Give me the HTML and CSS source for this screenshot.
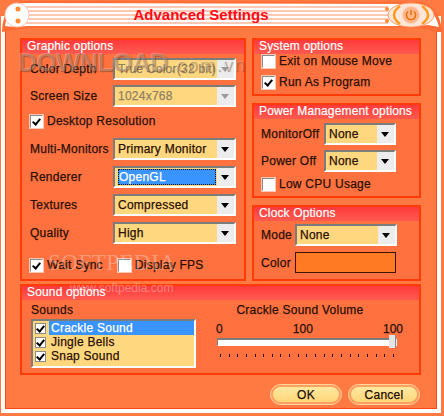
FILE: index.html
```html
<!DOCTYPE html>
<html lang="en">

<head>
    <meta charset="UTF-8">
    <title>Advanced Settings</title>
    <link rel="stylesheet" href="styles.css">
</head>

<body>
    <div class="window">
        <!-- title bar sits over the top of the frame -->
        <svg class="title-art" width="444" height="34" viewBox="0 0 444 34">
            <defs>
                <pattern id="stripes" width="4" height="4" patternUnits="userSpaceOnUse">
                    <rect width="4" height="2" fill="#ffffff" />
                    <rect y="2" width="4" height="2" fill="#ffc8b4" />
                </pattern>
            </defs>
            <path d="M2 32 Q3 1 26 1 L420 2 Q440 6 442 32 L438 32 Q430 30 420 28 L30 28 L14 30 Z" fill="#ff6c34" />
            <path d="M5 26 Q8 3 26 3 L418 4 Q434 7 439 27 L428 25 L420 26 L28 26 Q12 27 5 26 Z" fill="#fff" />
            <rect x="26" y="6" width="362" height="20" fill="url(#stripes)" />
            <ellipse cx="17" cy="15" rx="12" ry="12" fill="#fff" stroke="#ffc8b4" />
            <circle cx="18" cy="9" r="2.5" fill="#ff8a30" />
            <circle cx="18" cy="21" r="2.5" fill="#ff8a30" />
            <circle cx="387" cy="9" r="2" fill="#ff8a30" />
            <circle cx="387" cy="21" r="2" fill="#ff8a30" />
            <ellipse cx="411" cy="15" rx="23" ry="12" fill="#ffe6d8" stroke="#ff9a60" />
            <path d="M400 6 Q388 15 400 24" fill="none" stroke="#ff9a20" stroke-width="2.5" />
            <path d="M422 6 Q434 15 422 24" fill="none" stroke="#ff9a20" stroke-width="2.5" />
            <circle cx="411" cy="15" r="8.5" fill="#ffb48c" stroke="#ffd0b0" />
            <path d="M408 11.5 A4.6 4.6 0 1 0 414 11.5" fill="none" stroke="#e87000" stroke-width="1.4" />
            <path d="M411 10 V15" stroke="#e87000" stroke-width="1.4" />
        </svg>
        <h1 class="title">Advanced Settings</h1>

        <div class="frame">
            <div class="top-grid">
                <section class="group graphic">
                    <h2>Graphic options</h2>
                    <div class="graphic-body">
                        <div class="row first"><span class="lbl">Color Depth</span>
                            <div class="combo off"><span>True Color(32 bit)</span><i></i></div>
                        </div>
                        <div class="row"><span class="lbl">Screen Size</span>
                            <div class="combo off"><span>1024x768</span><i></i></div>
                        </div>
                        <label class="check desk"><b class="on"></b>Desktop Resolution</label>
                        <div class="row"><span class="lbl">Multi-Monitors</span>
                            <div class="combo"><span>Primary Monitor</span><i></i></div>
                        </div>
                        <div class="row"><span class="lbl">Renderer</span>
                            <div class="combo sel"><span>OpenGL</span><i></i></div>
                        </div>
                        <div class="row"><span class="lbl">Textures</span>
                            <div class="combo"><span>Compressed</span><i></i></div>
                        </div>
                        <div class="row"><span class="lbl">Quality</span>
                            <div class="combo"><span>High</span><i></i></div>
                        </div>
                        <div class="check-row">
                            <label class="check"><b class="on"></b>Wait Sync</label>
                            <label class="check"><b></b>Display FPS</label>
                        </div>
                    </div>
                </section>

                <div class="side">
                    <section class="group system">
                        <h2>System options</h2>
                        <div class="system-body">
                            <label class="check"><b></b>Exit on Mouse Move</label>
                            <label class="check"><b class="on"></b>Run As Program</label>
                        </div>
                    </section>
                    <section class="group power">
                        <h2>Power Management options</h2>
                        <div class="power-body">
                            <div class="row"><span class="lbl">MonitorOff</span>
                                <div class="combo"><span>None</span><i></i></div>
                            </div>
                            <div class="row"><span class="lbl">Power Off</span>
                                <div class="combo"><span>None</span><i></i></div>
                            </div>
                            <label class="check"><b></b>Low CPU Usage</label>
                        </div>
                    </section>
                    <section class="group clock">
                        <h2>Clock Options</h2>
                        <div class="clock-body">
                            <div class="row"><span class="lbl">Mode</span>
                                <div class="combo"><span>None</span><i></i></div>
                            </div>
                            <div class="row"><span class="lbl">Color</span>
                                <div class="swatch"></div>
                            </div>
                        </div>
                    </section>
                </div>
            </div>

            <section class="group sound">
                <h2>Sound options</h2>
                <div class="sound-body">
                    <div class="sounds">
                        <span class="lbl">Sounds</span>
                        <ul class="list">
                            <li class="picked"><b class="on"></b><span>Crackle Sound</span></li>
                            <li><b class="on"></b><span>Jingle Bells</span></li>
                            <li><b class="on"></b><span>Snap Sound</span></li>
                        </ul>
                    </div>
                    <div class="volume">
                        <div class="vol-title lbl">Crackle Sound Volume</div>
                        <div class="scale lbl"><span>0</span><span>100</span><span>100</span></div>
                        <div class="track"><div class="thumb"></div></div>
                        <div class="ticks" id="ticks"></div>
                    </div>
                </div>
            </section>

            <div class="buttons">
                <button type="button" class="btn">OK</button>
                <button type="button" class="btn">Cancel</button>
            </div>
        </div>

        <!-- watermarks stamped over the shot -->
        <div class="mark mark-dl">DOWNLOAD<small>.com.vn</small></div>
        <div class="mark mark-soft">SOFTPEDIA</div>
        <div class="mark mark-url">www.softpedia.com</div>
    </div>

    <script>
        const ticks = document.getElementById("ticks");
        for (let i = 0; i < 21; i++) {
            ticks.appendChild(document.createElement("u"));
        }
    </script>
</body>

</html>
```

FILE: styles.css
```css
body {
    margin: 0;
    font-family: "Liberation Sans", Arial, sans-serif;
    font-size: 12px;
    color: #2a1005;
}

.window {
    position: relative;
    width: 444px;
    height: 416px;
    overflow: hidden;
    background: #ff7a42;
}

.title-art {
    position: absolute;
    top: 0;
    left: 0;
}

.title {
    position: absolute;
    top: 5px;
    left: 0;
    width: 402px;
    margin: 0;
    text-align: center;
    font-size: 15px;
    line-height: 20px;
    color: #ff0a14;
}

/* Outer ring */
.frame {
    box-sizing: border-box;
    width: 440px;
    height: 397px;
    margin: 16px 0 0 1px;
    padding: 22px 16px 0 19px;
    background: #ff7a42;
    border: 4px solid #fff;
    border-top: 0;
    box-shadow: inset 0 0 0 1px #ff4a10;
}

.top-grid {
    display: grid;
    grid-template-columns: 226px 169px;
    column-gap: 6px;
    height: 242px;
    margin-left: -4px;
}

.side {
    display: flex;
    flex-direction: column;
    gap: 7px;
}

.group {
    box-sizing: border-box;
    background: #ff7240;
    border: 2px solid #ff3c08;
}

.group h2 {
    margin: 0;
    height: 14px;
    padding-left: 5px;
    font-size: 12px;
    font-weight: normal;
    line-height: 12px;
    letter-spacing: 0.15px;
    white-space: nowrap;
    color: #fff;
    background: linear-gradient(#ff3a3a, #ff5a50);
    -webkit-text-stroke: 0.2px #fff;
}

.lbl,
.check,
.combo span,
.list span {
    letter-spacing: 0.25px;
    white-space: nowrap;
    -webkit-text-stroke: 0.25px currentColor;
}

.row {
    display: flex;
    align-items: center;
}

/* combobox drawn by hand, a real select wouldn't look like this */
.combo {
    box-sizing: border-box;
    display: flex;
    align-items: center;
    justify-content: space-between;
    height: 22px;
    padding-left: 3px;
    background: #ffd77e;
    border: 2px solid;
    border-color: #7c7c7c #fff #fff #7c7c7c;
}

.combo i {
    position: relative;
    flex: none;
    width: 17px;
    height: 18px;
    background: #ececec;
}

.combo i::after {
    content: "";
    position: absolute;
    top: 7px;
    left: 4px;
    border: 4px solid transparent;
    border-top: 5px solid #000;
    border-bottom: 0;
}

.combo.off {
    color: #8c8264;
}

.combo.off i::after {
    border-top-color: #9a9a9a;
}

.combo.sel {
    padding-left: 2px;
}

.combo.sel span {
    flex: 1;
    margin: 1px;
    padding-left: 1px;
    line-height: 16px;
    color: #fff;
    background: #3a94ff;
    outline: 1px dotted #111;
    outline-offset: -1px;
}

.check {
    display: flex;
    align-items: center;
    gap: 4px;
}

b {
    box-sizing: border-box;
    display: block;
    position: relative;
    flex: none;
    width: 13px;
    height: 13px;
    background: #fff;
    border: 1px solid;
    border-color: #8a8a8a #fff #fff #8a8a8a;
    box-shadow: 0 0 0 1px rgba(255, 255, 255, 0.6);
}

b.on::after {
    content: "";
    position: absolute;
    top: 1px;
    left: 3px;
    width: 3px;
    height: 6px;
    border: solid #000;
    border-width: 0 2px 2px 0;
    transform: rotate(40deg);
}

/* Graphic options */
.graphic-body {
    display: flex;
    flex-direction: column;
    padding: 1px 8px 0;
}

.graphic-body .row {
    height: 28px;
}

.graphic-body .row.first {
    height: 27px;
}

.graphic-body .lbl {
    width: 83px;
    flex: none;
}

.graphic-body .combo {
    width: 124px;
}

.desk {
    height: 22px;
    margin-bottom: 3px;
}

.check-row {
    display: flex;
    gap: 15px;
    margin-top: 11px;
}

/* System */
.system {
    height: 58px;
}

.system-body {
    display: flex;
    flex-direction: column;
    gap: 7px;
    padding: 0 8px;
}

/* Power */
.power {
    height: 95px;
}

.power-body {
    display: flex;
    flex-direction: column;
    padding: 1px 7px;
}

.power-body .row {
    height: 27px;
}

.power-body .lbl {
    width: 63px;
    flex: none;
}

.power-body .combo {
    width: 72px;
}

.power-body .check {
    margin: 3px 0 0 1px;
}

/* Clock */
.clock {
    height: 76px;
}

.clock-body {
    display: flex;
    flex-direction: column;
    gap: 6px;
    padding: 3px 7px;
}

.clock-body .lbl {
    width: 34px;
    flex: none;
}

.clock-body .combo {
    width: 102px;
}

.swatch {
    box-sizing: border-box;
    width: 101px;
    height: 21px;
    background: #ff7a22;
    border: 1px solid #3c1400;
}

/* Sound */
.sound {
    height: 91px;
    margin: 4px 0 0 -4px;
    width: 401px;
}

.sound-body {
    display: flex;
    padding: 3px 9px 0;
}

.sounds {
    width: 186px;
    flex: none;
}

.list {
    box-sizing: border-box;
    width: 165px;
    height: 49px;
    margin: 2px 0 0;
    padding: 0 0 0 2px;
    list-style: none;
    background: #ffd77e;
    border: 2px solid;
    border-color: #7c7c7c #fff #fff #7c7c7c;
}

.list li {
    display: flex;
    align-items: center;
    gap: 3px;
    height: 14px;
}

.list b {
    width: 11px;
    height: 11px;
    border-color: #8a8a8a;
    box-shadow: none;
}

.list b.on::after {
    left: 2px;
    top: 0;
}

.list span {
    flex: 1;
    line-height: 14px;
    padding-left: 2px;
}

.list .picked span {
    color: #fff;
    background: #3a94ff;
}

.volume {
    width: 180px;
}

.vol-title {
    text-align: center;
    margin-left: -14px;
}

.scale {
    display: flex;
    justify-content: space-between;
    margin: 5px -6px 0 -1px;
    letter-spacing: 0;
}

.track {
    position: relative;
    box-sizing: border-box;
    height: 8px;
    margin-top: 2px;
    background: #fff;
    border: 1px solid;
    border-color: #7c7c7c #fff #fff #7c7c7c;
    border-top-width: 2px;
}

.thumb {
    position: absolute;
    top: -5px;
    right: 0;
    width: 6px;
    height: 13px;
    background: #e4e4e4;
    border-right: 1px solid #8a8a8a;
}

.ticks {
    display: flex;
    justify-content: space-between;
    margin: 8px 3px 0;
}

.ticks u {
    display: block;
    width: 1px;
    height: 3px;
    background: #2a1005;
}

/* Buttons */
.buttons {
    display: flex;
    justify-content: flex-end;
    gap: 8px;
    margin: 10px 2px 0 0;
}

.btn {
    box-sizing: border-box;
    width: 70px;
    height: 19px;
    padding: 0;
    font-family: inherit;
    font-size: 12px;
    letter-spacing: 0.25px;
    color: #1c0c04;
    -webkit-text-stroke: 0.25px currentColor;
    background: linear-gradient(#ffe9a0, #ffd678);
    border: 2px solid #ffa060;
    border-radius: 10px;
    outline: 1px solid #ffd8a0;
}

/* Watermarks */
.mark {
    position: absolute;
    white-space: nowrap;
    pointer-events: none;
}

.mark-dl {
    top: 47px;
    left: 18px;
    font-size: 26px;
    font-weight: bold;
    letter-spacing: -0.8px;
    color: rgba(255, 255, 255, 0.22);
    text-shadow: 1px 1px 1px rgba(90, 50, 30, 0.45);
}

.mark-dl small {
    margin-left: 2px;
    font-size: 18px;
    font-weight: normal;
    letter-spacing: 2px;
}

.mark-soft {
    top: 250px;
    left: 48px;
    font-family: "Liberation Serif", serif;
    font-size: 23px;
    letter-spacing: 0.5px;
    color: rgba(255, 255, 255, 0.3);
}

.mark-url {
    top: 281px;
    left: 70px;
    font-size: 12px;
    color: rgba(255, 255, 255, 0.35);
}
```
